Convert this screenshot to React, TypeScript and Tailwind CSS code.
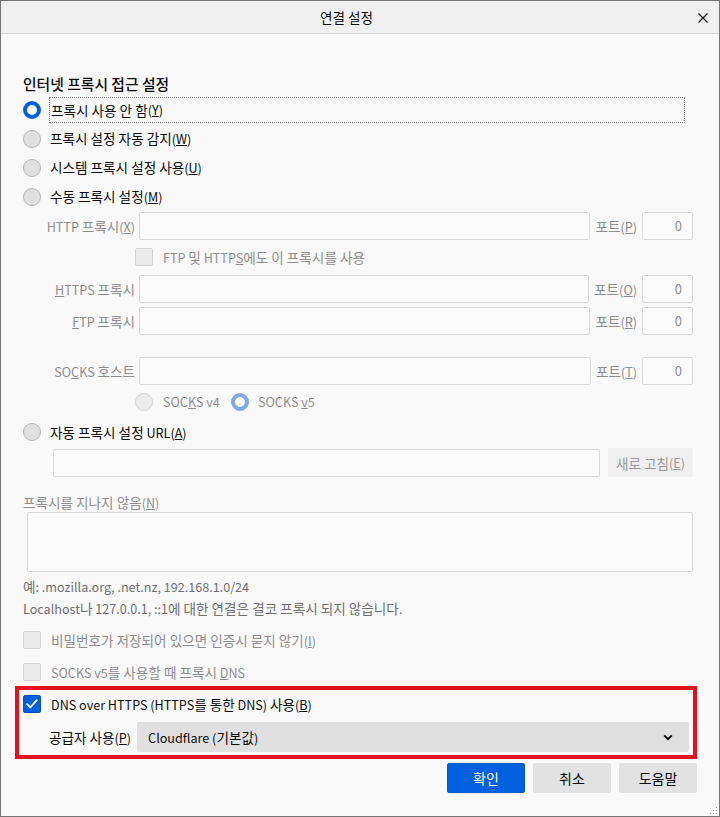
import React from 'react';

// Hangul runs get a slightly larger size so they take the width of the original dialog font
function splitHangul(s: string, key: number) {
  const parts = s.split(/([\uac00-\ud7a3]+(?: [\uac00-\ud7a3]+)*)/);
  return parts.map((p, i) =>
    i % 2 === 1 ? (
      <span key={`${key}-${i}`} className="text-[13.6px]">
        {p}
      </span>
    ) : (
      p
    )
  );
}

function K({ children }: { children: React.ReactNode }) {
  return (
    <>
      {React.Children.toArray(children).map((c, i) =>
        typeof c === 'string' ? <React.Fragment key={i}>{splitHangul(c, i)}</React.Fragment> : c
      )}
    </>
  );
}

function Radio({ checked, disabled }: { checked?: boolean; disabled?: boolean }) {
  if (checked) {
    return (
      <span
        className={`block w-[18px] h-[18px] rounded-full shrink-0 bg-white border-[4px] ${
          disabled ? 'border-[#80a8e4]' : 'border-[#0060df]'
        }`}
      />
    );
  }
  return (
    <span
      className={`block w-[18px] h-[18px] rounded-full shrink-0 border ${
        disabled ? 'bg-[#ececec] border-[#d6d6d6]' : 'bg-[#e1e1e1] border-[#b2b2b2]'
      }`}
    />
  );
}

function Check({ checked }: { checked?: boolean }) {
  if (checked) {
    return (
      <span className="flex items-center justify-center w-[18px] h-[18px] shrink-0 rounded-[2px] bg-[#0060df] border border-[#0b4fb8]">
        <svg width="12" height="10" viewBox="0 0 12 10" fill="none">
          <path d="M1.2 5.2 L4.4 8.4 L10.8 1.2" stroke="white" strokeWidth="1.8" strokeLinecap="round" strokeLinejoin="round" />
        </svg>
      </span>
    );
  }
  return <span className="block w-[18px] h-[18px] shrink-0 rounded-[2px] bg-[#ebebeb] border border-[#d3d3d3]" />;
}

function Field({ className = '' }: { className?: string }) {
  return <div className={`h-full bg-[#fbfbfb] border border-[#d9d9d9] rounded-[2px] ${className}`} />;
}

function PortRow({
  label,
  portLabel,
  className = '',
}: {
  label: React.ReactNode;
  portLabel: React.ReactNode;
  className?: string;
}) {
  return (
    <div className={`h-[28px] flex items-center text-[#8e8e8e] ${className}`}>
      <span className="w-[114px] pr-[2px] text-right whitespace-nowrap">{label}</span>
      <Field className="ml-[2px] flex-1" />
      <span className="mx-[5px] whitespace-nowrap">{portLabel}</span>
      <div className="w-[51px] h-full bg-[#fbfbfb] border border-[#d9d9d9] rounded-[2px] flex items-center justify-end pr-[10px] text-[13px]">
        0
      </div>
    </div>
  );
}

export default function App() {
  return (
    <div className="relative w-[720px] h-[817px] overflow-hidden bg-[#f9f9f9] border border-[#747474] flex flex-col font-['Noto_Sans_CJK_KR',sans-serif] text-[12.6px] leading-[18px] text-[#0c0c0d]">
      {/* title bar */}
      <div className="relative h-[33px] shrink-0 bg-[#f0f0f0] border-b border-[#d4d4d4] flex items-center justify-center pr-[27px]">
        <span className="text-[13.6px]">연결 설정</span>
        <svg className="absolute right-[11px] top-[12px]" width="10" height="10" viewBox="0 0 10 10">
          <path d="M0.5 0.5 L9.5 9.5 M9.5 0.5 L0.5 9.5" stroke="#1a1a1a" strokeWidth="1.2" />
        </svg>
      </div>

      <div className="flex flex-col pl-[22px] pr-[26px]">
        <div className="mt-[40px] mb-[1px] h-[20px] leading-[20px] text-[14.8px] font-medium">인터넷 프록시 접근 설정</div>

        <div className="h-[29px] flex items-center">
          <Radio checked />
          <span className="ml-[8px] w-[636px] h-[26px] border border-dotted border-[#7a7a7a] flex items-center pl-[1px]">
            <K>프록시 사용 안 함</K>(<u>Y</u>)
          </span>
        </div>
        <div className="h-[29px] flex items-center">
          <Radio />
          <span className="ml-[9px]">
            <K>프록시 설정 자동 감지</K>(<u>W</u>)
          </span>
        </div>
        <div className="h-[29px] flex items-center">
          <Radio />
          <span className="ml-[9px]">
            <K>시스템 프록시 설정 사용</K>(<u>U</u>)
          </span>
        </div>
        <div className="h-[29px] flex items-center">
          <Radio />
          <span className="ml-[9px]">
            <K>수동 프록시 설정</K>(<u>M</u>)
          </span>
        </div>

        <PortRow
          className="mt-[1px]"
          label={
            <>
              <K>HTTP 프록시</K>(<u>X</u>)
            </>
          }
          portLabel={
            <>
              <K>포트</K>(<u>P</u>)
            </>
          }
        />

        <div className="mt-[3px] h-[28px] flex items-center pl-[112px] text-[#8e8e8e]">
          <Check />
          <span className="ml-[10px]">
            <K>FTP 및 HTTP</K>
            <u>S</u>
            <K>에도 이 프록시를 사용</K>
          </span>
        </div>

        <PortRow
          className="mt-[4px]"
          label={
            <>
              <u>H</u>
              <K>TTPS 프록시</K>
            </>
          }
          portLabel={
            <>
              <K>포트</K>(<u>O</u>)
            </>
          }
        />
        <PortRow
          className="mt-[4px]"
          label={
            <>
              <u>F</u>
              <K>TP 프록시</K>
            </>
          }
          portLabel={
            <>
              <K>포트</K>(<u>R</u>)
            </>
          }
        />
        <PortRow
          className="mt-[22px]"
          label={
            <>
              SO<u>C</u>
              <K>KS 호스트</K>
            </>
          }
          portLabel={
            <>
              <K>포트</K>(<u>T</u>)
            </>
          }
        />

        <div className="mt-[4px] h-[26px] flex items-center pl-[112px] text-[#8e8e8e]">
          <Radio disabled />
          <span className="ml-[10px] w-[68px]">
            SOC<u>K</u>S v4
          </span>
          <Radio checked disabled />
          <span className="ml-[9px]">
            SOCKS <u>v</u>5
          </span>
        </div>

        <div className="mt-[3px] h-[28px] flex items-center">
          <Radio />
          <span className="ml-[9px]">
            <K>자동 프록시 설정 URL</K>(<u>A</u>)
          </span>
        </div>

        <div className="mt-[2px] h-[29px] flex items-center pl-[30px]">
          <div className="flex-1 h-[28px] bg-[#fbfbfb] border border-[#d9d9d9] rounded-[2px]" />
          <div className="ml-[8px] w-[85px] h-[29px] rounded-[2px] bg-[#efefef] text-[#9a9a9a] flex items-center justify-center">
            <K>새로 고침</K>(<u>E</u>)
          </div>
        </div>

        <div className="mt-[16px] h-[18px] text-[#8e8e8e]">
          <K>프록시를 지나지 않음</K>(<u>N</u>)
        </div>
        <div className="mt-[1px] ml-[4px] h-[60px] bg-[#fbfbfb] border border-[#d9d9d9] rounded-[2px]" />

        <div className="mt-[5px] h-[18px] text-[#6f6f6f]">
          <K>예: .mozilla.org, .net.nz, 192.168.1.0/24</K>
        </div>
        <div className="mt-[4px] h-[18px] text-[#6f6f6f]">
          <K>Localhost나 127.0.0.1, ::1에 대한 연결은 결코 프록시 되지 않습니다.</K>
        </div>

        <div className="mt-[10px] h-[26px] flex items-center text-[#8e8e8e]">
          <Check />
          <span className="ml-[10px]">
            <K>비밀번호가 저장되어 있으면 인증시 묻지 않기</K>(<u>I</u>)
          </span>
        </div>
        <div className="mt-[6px] h-[26px] flex items-center text-[#8e8e8e]">
          <Check />
          <span className="ml-[10px]">
            <K>SOCKS v5를 사용할 때 프록시 </K>
            <u>D</u>NS
          </span>
        </div>

        {/* highlighted DNS over HTTPS block */}
        <div className="mt-[1px] -ml-[8px] -mr-[4px] border-[4px] border-[#e2111d] pl-[4px] pr-[4px] pb-[3px]">
          <div className="mt-[1px] h-[26px] flex items-center">
            <Check checked />
            <span className="ml-[10px]">
              <K>DNS over HTTPS (HTTPS를 통한 DNS) 사용</K>(<u>B</u>)
            </span>
          </div>
          <div className="mt-[5px] h-[30px] flex items-center">
            <span className="ml-[26px] whitespace-nowrap">
              <K>공급자 사용</K>(<u>P</u>)
            </span>
            <div className="ml-[6px] flex-1 h-full rounded-[2px] bg-[#e0e0e0] flex items-center justify-between pl-[11px] pr-[16px]">
              <span>
                <K>Cloudflare (기본값)</K>
              </span>
              <svg width="10" height="7" viewBox="0 0 10 7">
                <path d="M1.2 1.4 L5 5.2 L8.8 1.4" fill="none" stroke="#0c0c0d" strokeWidth="2" />
              </svg>
            </div>
          </div>
        </div>

        <div className="mt-[4px] -mr-[4px] h-[30px] flex justify-end gap-[8px] text-[14px]">
          <div className="w-[78px] h-full rounded-[2px] bg-[#0060df] border border-[#0a55c4] text-white flex items-center justify-center">
            확인
          </div>
          <div className="w-[78px] h-full rounded-[2px] bg-[#e2e2e2] flex items-center justify-center">취소</div>
          <div className="w-[78px] h-full rounded-[2px] bg-[#e2e2e2] flex items-center justify-center">도움말</div>
        </div>
      </div>

      <svg className="absolute right-[1px] bottom-[1px]" width="9" height="9" viewBox="0 0 9 9">
        <g fill="#9a9a9a">
          <rect x="7" y="1" width="1" height="1" />
          <rect x="4" y="4" width="1" height="1" />
          <rect x="7" y="4" width="1" height="1" />
          <rect x="1" y="7" width="1" height="1" />
          <rect x="4" y="7" width="1" height="1" />
          <rect x="7" y="7" width="1" height="1" />
        </g>
      </svg>
    </div>
  );
}
